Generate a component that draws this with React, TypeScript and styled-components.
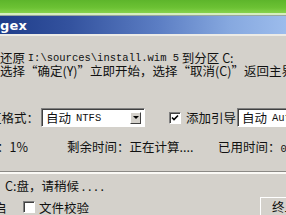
import { FC } from 'react'
import styled, { createGlobalStyle } from 'styled-components'

const GlobalStyle = createGlobalStyle`
	html, body {
		margin: 0;
		padding: 0;
		background: #d4d1cb;
	}
	body {
		font-family: 'Noto Sans CJK SC', 'Liberation Sans', sans-serif;
	}
`

const Screen = styled.div`
	width: 286px;
	height: 215px;
	overflow: hidden;
	display: flex;
	flex-direction: column;
	background: #d4d1cb;
	color: #111;
	font-size: 12.5px;
`

const Desktop = styled.div`
	height: 13px;
	flex: none;
	background: linear-gradient(180deg, #5db52b 0%, #6cc234 60%, #86d24c 100%);
	border-bottom: 2px solid #d6eec0;
	box-shadow: 0 1px 0 #9aa89a;
`

const TitleBar = styled.div`
	height: 18px;
	flex: none;
	margin-top: 1px;
	display: flex;
	align-items: center;
	background: linear-gradient(90deg, #1f3d8a 0%, #34539f 25%, #5b7dc3 55%, #86a8df 80%, #9cbcec 100%);
	border-bottom: 2px solid #ecebe6;
	color: #fff;
	font-family: 'DejaVu Sans', 'Liberation Sans', sans-serif;
	font-weight: bold;
	font-size: 13px;
	letter-spacing: 0.2px;
`

const Body = styled.div`
	flex: 1;
	display: flex;
	flex-direction: column;
	padding-top: 15px;
`

const Message = styled.div`
	height: 13px;
	flex: none;
	display: flex;
	align-items: center;
	white-space: nowrap;
`

const Mono = styled.span`
	font-family: 'Liberation Mono', monospace;
	font-size: 10.5px;
`

const Row = styled.div<{ $top: number; $h: number }>`
	display: flex;
	align-items: center;
	margin-top: ${({ $top }) => $top}px;
	height: ${({ $h }) => $h}px;
	white-space: nowrap;
	flex: none;
`

const Label = styled.span<{ $shift?: number; $w?: number }>`
	margin-left: ${({ $shift }) => $shift ?? 0}px;
	${({ $w }) => ($w ? `width: ${$w}px; flex: none;` : '')}
`

const Select = styled.div<{ $w: number }>`
	width: ${({ $w }) => $w}px;
	height: 19px;
	flex: none;
	box-sizing: border-box;
	display: flex;
	align-items: center;
	background: #fff;
	border-top: 1px solid #808080;
	border-left: 1px solid #808080;
	border-right: 1px solid #fff;
	border-bottom: 1px solid #fff;
	box-shadow: inset 1px 1px 0 #404040;
	padding-left: 4px;
	padding-right: 3px;
	gap: 5px;
`

const DropButton = styled.div`
	margin-left: auto;
	width: 11px;
	height: 12px;
	box-sizing: border-box;
	background: #d4d1cb;
	border-top: 1px solid #fff;
	border-left: 1px solid #fff;
	border-right: 1px solid #404040;
	border-bottom: 1px solid #404040;
	display: flex;
	align-items: center;
	justify-content: center;
	&:after {
		content: '';
		border-left: 3px solid transparent;
		border-right: 3px solid transparent;
		border-top: 3px solid #000;
	}
`

const Check = styled.div`
	width: 12px;
	height: 12px;
	flex: none;
	box-sizing: border-box;
	background: #fff;
	border-top: 1px solid #808080;
	border-left: 1px solid #808080;
	border-right: 1px solid #fff;
	border-bottom: 1px solid #fff;
	box-shadow: inset 1px 1px 0 #404040;
	display: flex;
	align-items: center;
	justify-content: center;
`

const Groove = styled.div`
	flex: none;
	height: 0;
	border-top: 1px solid #8c8a86;
	border-bottom: 2px solid #fbfaf6;
	margin-top: 18px;
`

const Button = styled.div`
	margin-left: auto;
	width: 40px;
	height: 20px;
	flex: none;
	box-sizing: border-box;
	align-self: flex-start;
	border-top: 1px solid #fff;
	border-left: 1px solid #fff;
	border-right: 1px solid #404040;
	border-bottom: 1px solid #404040;
	box-shadow: inset -1px -1px 0 #808080;
	padding-left: 11px;
	line-height: 17px;
	margin-right: -14px;
`

const CheckMark: FC = () => (
	<svg width="8" height="8" viewBox="0 0 8 8">
		<path d="M1 3.5 L3 5.5 L7 1.5" stroke="#000" strokeWidth="1.6" fill="none" />
	</svg>
)

const App: FC = () => {
	return (
		<>
			<GlobalStyle />
			<Screen>
				<Desktop />
				<TitleBar>gex</TitleBar>
				<Body>
					<Message>
						还原&nbsp;<Mono>I:\sources\install.wim 5</Mono>&nbsp;到分区 C:
					</Message>
					<Message>选择“确定(Y)”立即开始，选择“取消(C)”返回主界面.</Message>
					<Row $top={31} $h={19}>
						<Label $shift={-11} $w={52}>区格式：</Label>
						<Select $w={104}>
							<span>自动</span>
							<Mono>NTFS</Mono>
							<DropButton />
						</Select>
						<Label $w={24} />
						<Check>
							<CheckMark />
						</Check>
						<Label $shift={5} $w={51}>添加引导</Label>
						<Select $w={70}>
							<span>自动</span>
							<Mono>Auto</Mono>
						</Select>
					</Row>
					<Row $top={12} $h={14}>
						<Label $shift={-3} $w={70}>：1%</Label>
						<Label $w={151}>剩余时间：正在计算....</Label>
						<Label>
							已用时间：<Mono>00</Mono>
						</Label>
					</Row>
					<Groove />
					<Row $top={4} $h={14}>
						<Label $shift={5}>C:盘，请稍候 . . . .</Label>
					</Row>
					<Row $top={5} $h={20}>
						<Label $shift={-6} $w={29}>启</Label>
						<Check />
						<Label $shift={4}>文件校验</Label>
						<Button>终止</Button>
					</Row>
				</Body>
			</Screen>
		</>
	)
}

export default App
